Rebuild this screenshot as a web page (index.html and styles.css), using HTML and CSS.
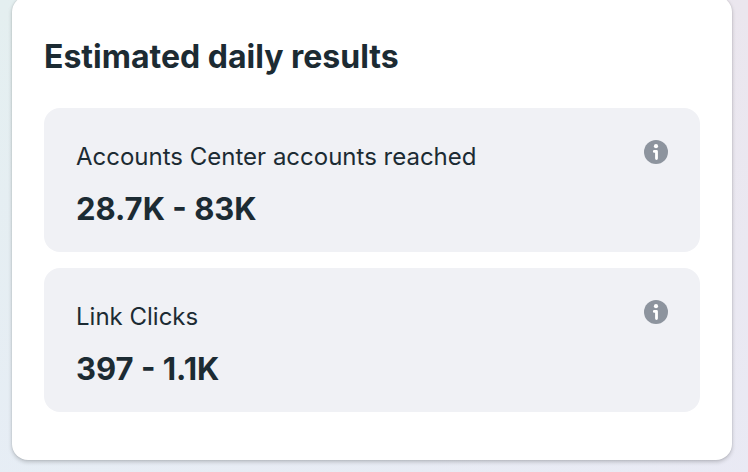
FILE: index.html
```html
<!DOCTYPE html>
<html lang="en">
<head>
    <title>Estimated daily results</title>
    <meta charset="utf-8">
    <meta name="viewport" content="width=device-width, initial-scale=1">
    <link rel="stylesheet" href="styles.css">
</head>
<body>
    <section class="card">
        <h2 class="title">Estimated daily results</h2>
        <div class="results">
            <div class="result">
                <div class="result-text">
                    <div class="label">Accounts Center accounts reached</div>
                    <div class="value">28.7K - 83K</div>
                </div>
                <button class="info" type="button" aria-label="About accounts reached">
                    <svg viewBox="0 0 24 24" width="24" height="24" aria-hidden="true">
                        <circle cx="12" cy="12" r="12" fill="#8d949e"/>
                        <circle cx="12" cy="6.2" r="2.1" fill="#fff"/>
                        <path d="M10.3 11.4h2.2v7.2" fill="none" stroke="#fff" stroke-width="2.8" stroke-linecap="round" stroke-linejoin="round"/>
                    </svg>
                </button>
            </div>
            <div class="result">
                <div class="result-text">
                    <div class="label">Link Clicks</div>
                    <div class="value">397 - 1.1K</div>
                </div>
                <button class="info" type="button" aria-label="About link clicks">
                    <svg viewBox="0 0 24 24" width="24" height="24" aria-hidden="true">
                        <circle cx="12" cy="12" r="12" fill="#8d949e"/>
                        <circle cx="12" cy="6.2" r="2.1" fill="#fff"/>
                        <path d="M10.3 11.4h2.2v7.2" fill="none" stroke="#fff" stroke-width="2.8" stroke-linecap="round" stroke-linejoin="round"/>
                    </svg>
                </button>
            </div>
        </div>
    </section>
</body>
</html>
```

FILE: styles.css
```css
*{
    box-sizing: border-box;
    margin: 0;
    padding: 0;
}
body{
    display: flow-root;
    min-height: 100vh;
    font-family: Inter, "Liberation Sans", sans-serif;
    color: #1c2b33;
    background: linear-gradient(to bottom, rgba(232,236,248,0), rgba(232,236,248,0.6)), linear-gradient(to right, #e4eff0, #ebe6ee);
}
.card{
    margin: -4px 16px 12px 12px;
    padding: 40px 32px 48px;
    border-radius: 16px;
    background-color: #ffffff;
    box-shadow: 0 2px 4px rgba(0,0,0,0.2), 0 0 2px rgba(0,0,0,0.12);
}
.title,
.value{
    font-size: 32px;
    font-weight: 700;
    line-height: 42px;
}
.value{
    font-size: 31px;
}
.results{
    display: flex;
    flex-direction: column;
    gap: 16px;
    margin-top: 30px;
}
.result{
    display: flex;
    justify-content: space-between;
    align-items: flex-start;
    padding: 32px 32px 22px;
    border-radius: 16px;
    background-color: #f0f1f5;
}
.label{
    font-size: 24px;
    line-height: 34px;
    margin-bottom: 14px;
}
.info{
    display: flex;
    border: 0;
    border-radius: 50%;
    background: none;
    cursor: pointer;
}
```
